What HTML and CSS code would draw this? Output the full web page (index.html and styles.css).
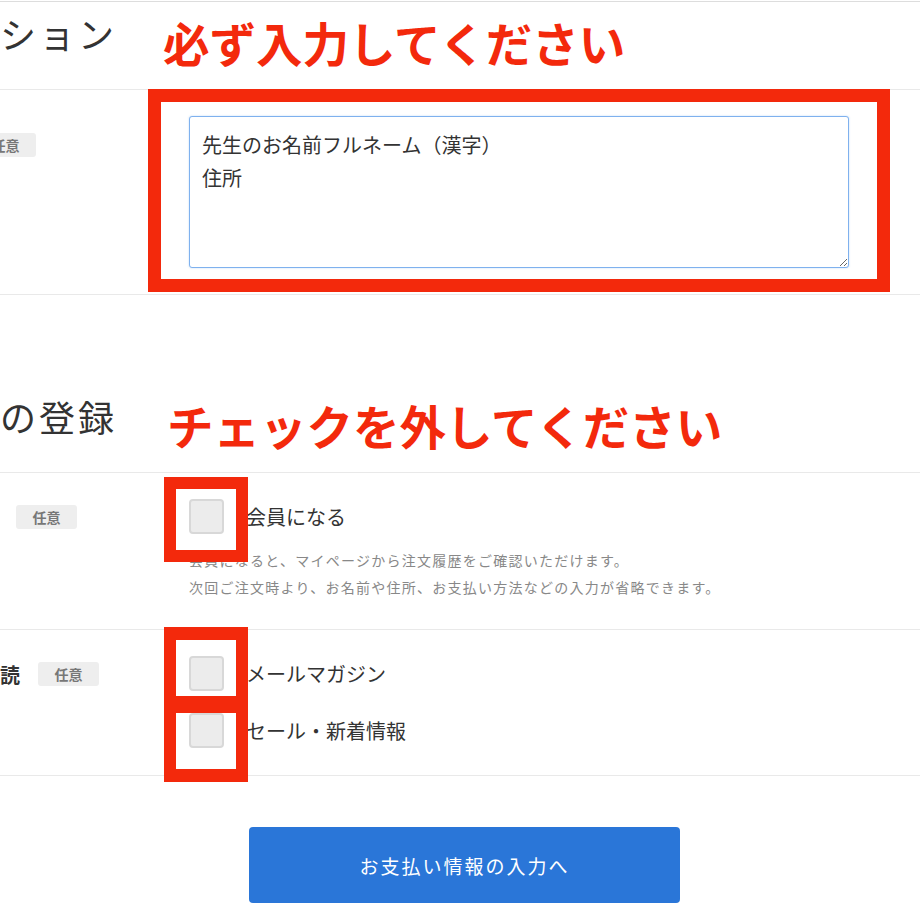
FILE: index.html
```html
<!DOCTYPE html>
<html lang="ja">
<head>
  <meta charset="UTF-8">
  <meta name="viewport" content="width=device-width, initial-scale=1.0">
  <title>ご注文手続き</title>
  <link rel="stylesheet" href="styles.css">
</head>
<body>
  <form class="order-form">
    <div class="section-head">
      <h2 class="section-title">ション</h2>
      <p class="mark-text">必ず入力してください</p>
    </div>

    <div class="row">
      <div class="row-label label-text-offset">
        <span class="badge badge-cut">任意</span>
      </div>
      <div class="row-body">
        <textarea class="memo" rows="4">先生のお名前フルネーム（漢字）
住所</textarea>
      </div>
      <div class="mark-frame frame-memo"></div>
    </div>

    <div class="section-head section-head-gap">
      <h2 class="section-title">の登録</h2>
      <p class="mark-text">チェックを外してください</p>
    </div>

    <div class="row row-member">
      <div class="row-label">
        <span class="badge badge-member">任意</span>
      </div>
      <div class="row-body">
        <label class="check">
          <input type="checkbox">
          <span>会員になる</span>
        </label>
        <p class="help">会員になると、マイページから注文履歴をご確認いただけます。<br>次回ご注文時より、お名前や住所、お支払い方法などの入力が省略できます。</p>
      </div>
      <div class="mark-frame frame-member"></div>
    </div>

    <div class="row row-news">
      <div class="row-label">
        <span class="label-name">読</span>
        <span class="badge">任意</span>
      </div>
      <div class="row-body check-list">
        <label class="check">
          <input type="checkbox">
          <span>メールマガジン</span>
        </label>
        <label class="check">
          <input type="checkbox">
          <span>セール・新着情報</span>
        </label>
      </div>
      <div class="mark-frame frame-news-1"></div>
      <div class="mark-frame frame-news-2"></div>
    </div>

    <div class="actions">
      <button type="submit" class="btn-next">お支払い情報の入力へ</button>
    </div>
  </form>
</body>
</html>
```

FILE: styles.css
```css
body {
  margin: 0;
  padding: 0;
  background-color: #fff;
  color: #333;
  font-family: "Noto Sans CJK JP", "Noto Sans", sans-serif;
  overflow: hidden;
}
.order-form {
  margin-top: 1px;
  border-top: 1px solid #ddd;
}

/* section heading + red note */
.section-head {
  display: flex;
  align-items: flex-start;
  height: 87px;
  border-bottom: 1px solid #e9e9e9;
}
.section-head-gap {
  margin-top: 90px;
}
.section-title {
  width: 163px;
  margin: 13px 0 0 0;
  font-size: 36px;
  line-height: 36px;
  font-weight: 400;
  letter-spacing: 3px;
  color: #333;
}
.mark-text {
  margin: 17px 0 0 0;
  font-size: 46.5px;
  line-height: 46px;
  font-weight: 700;
  color: #f3290c;
  white-space: nowrap;
}
.section-head-gap .mark-text {
  margin-left: 4px;
}

/* rows */
.row {
  position: relative;
  display: grid;
  grid-template-columns: 189px 1fr;
  padding: 26px 0;
  border-bottom: 1px solid #e9e9e9;
}
.row-member {
  padding-bottom: 28px;
}
.row-news {
  padding-bottom: 27px;
}
.row-label {
  display: flex;
  align-items: center;
  height: 24px;
  padding-top: 6px;
}
.label-text-offset {
  padding-top: 17px;
}
.label-name {
  font-size: 20px;
  font-weight: 700;
  color: #333;
}
.badge {
  display: inline-block;
  width: 61px;
  height: 24px;
  line-height: 24px;
  margin-left: 18px;
  text-align: center;
  font-size: 14px;
  font-weight: 700;
  color: #777;
  background-color: #eee;
  border-radius: 3px;
}
.badge-cut {
  margin-left: -25px;
}
.badge-member {
  margin-left: 16px;
}

.memo {
  display: block;
  box-sizing: border-box;
  width: 660px;
  height: 152px;
  margin: 0;
  padding: 11px 12px;
  font-family: inherit;
  font-size: 20px;
  line-height: 33px;
  color: #333;
  border: 1px solid #7fb1ee;
  border-radius: 3px;
  box-shadow: 0 0 2px rgba(60, 140, 230, 0.35);
  outline: none;
}

.check {
  display: flex;
  align-items: center;
  gap: 22px;
  height: 35px;
  font-size: 20px;
  color: #333;
}
.check input {
  appearance: none;
  -webkit-appearance: none;
  box-sizing: border-box;
  width: 35px;
  height: 35px;
  margin: 0;
  background-color: #ececec;
  border: 2px solid #d8d8d8;
  border-radius: 4px;
}
.check-list {
  display: flex;
  flex-direction: column;
  gap: 22px;
}
.help {
  margin: 13px 0 0 0;
  font-size: 14px;
  line-height: 27px;
  letter-spacing: 1.25px;
  color: #888;
}

/* red annotation frames laid over the fields */
.mark-frame {
  position: absolute;
  box-sizing: border-box;
  border: 12px solid #f3290c;
  pointer-events: none;
}
.frame-memo {
  top: -1px;
  left: 148px;
  width: 742px;
  height: 203px;
  border-width: 13px;
}
.frame-member {
  top: 4px;
  left: 164px;
  width: 84px;
  height: 85px;
}
.frame-news-1 {
  top: -3px;
  left: 164px;
  width: 84px;
  height: 82px;
  border-width: 13px 12px;
}
.frame-news-2 {
  top: 70px;
  left: 164px;
  width: 84px;
  height: 82px;
  border-width: 13px 12px;
}

.actions {
  padding: 51px 0 0 249px;
}
.btn-next {
  width: 431px;
  height: 76px;
  font-family: inherit;
  font-size: 19px;
  font-weight: 400;
  letter-spacing: 2px;
  color: #fff;
  background-color: #2a76d8;
  border: none;
  border-radius: 4px;
  cursor: pointer;
}
```
